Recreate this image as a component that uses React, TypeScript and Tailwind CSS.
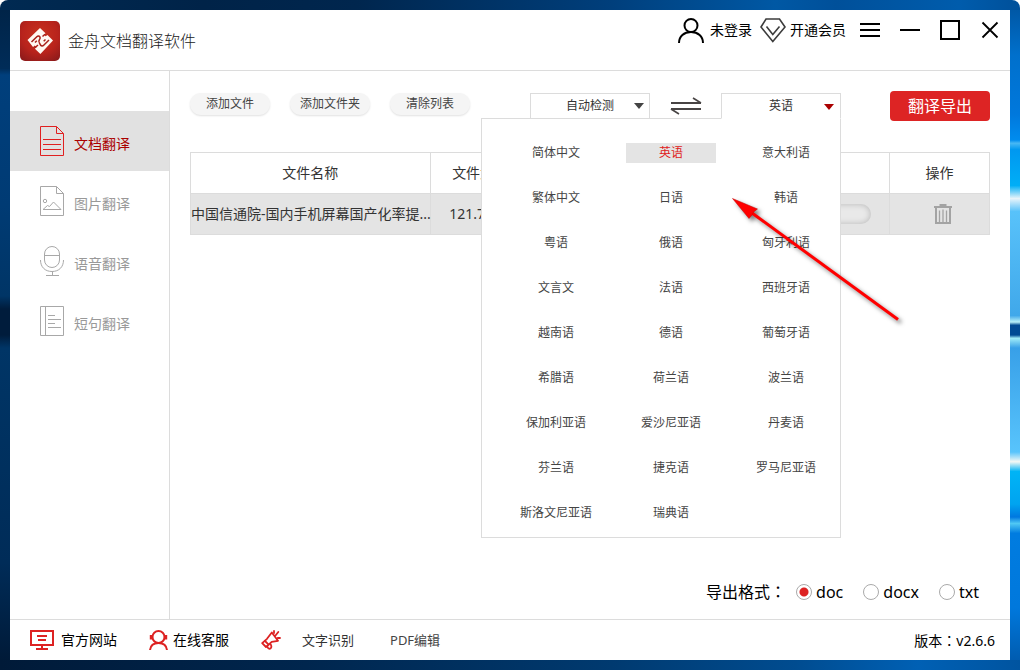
import { useState } from "react";
import type { ReactNode } from "react";

const NAV = ["文档翻译", "图片翻译", "语音翻译", "短句翻译"];

const LANGUAGES = [
  "简体中文", "英语", "意大利语",
  "繁体中文", "日语", "韩语",
  "粤语", "俄语", "匈牙利语",
  "文言文", "法语", "西班牙语",
  "越南语", "德语", "葡萄牙语",
  "希腊语", "荷兰语", "波兰语",
  "保加利亚语", "爱沙尼亚语", "丹麦语",
  "芬兰语", "捷克语", "罗马尼亚语",
  "斯洛文尼亚语", "瑞典语",
];

function Logo() {
  return (
    <svg width="40" height="40" viewBox="0 0 40 40" aria-hidden="true">
      <defs>
        <radialGradient id="logo" cx="0.5" cy="0.35" r="0.75">
          <stop offset="0" stopColor="#c8321f" />
          <stop offset="0.6" stopColor="#b8231c" />
          <stop offset="1" stopColor="#8e1b1b" />
        </radialGradient>
      </defs>
      <rect width="40" height="40" rx="5" fill="url(#logo)" />
      <path d="M7.500 19 20 7l5.500 5.200-1.500 1.600 1.600 1.500 1.900-1.400L33 19.500 20.400 33l-5.500-5.300 1.600-1.500-1.700-1.600-1.800 1.500Z" fill="#fff8f2" />
      <path
        d="M25 13.200 22.500 15.500M11.500 21 16.800 15.700c1-1 2.300-.9 3 .1.800 1.100.4 2-.4 3-1 1.200-1 2 .1 3.300M15.200 26.500 18 24M29 19 23.700 24.300c-1 1-2.300.9-3-.1-.5-.7-.9-1.400-1.200-2.100M15 21.500l1.800-1.800M25.500 18.500l-1.800 1.800"
        fill="none"
        stroke="#a82019"
        strokeWidth="1.500"
      />
    </svg>
  );
}

function NavIcon({ index }: { index: number }) {
  return (
    <svg width="24" height="30" viewBox="0 0 24 30" fill="none" stroke="currentColor" aria-hidden="true">
      {index < 2 && <path d="M16.500.5H.5v29h23V7.500zM16.500.5v7h7" />}
      {index === 0 && <path d="M3 13.500h18M3 18.500h18M3 23.500h18" />}
      {index === 1 && (
        <>
          <circle cx="5" cy="15" r="1.700" />
          <path d="m3 23.500 4.500-4 2 1 4-4.500 7.500 7.500z" />
        </>
      )}
      {index === 2 && (
        <>
          <rect x="4.500" y=".5" width="15" height="21" rx="7.500" />
          <path d="M4.500 9.500h15M.5 14c0 7 4.500 11.500 11.500 11.500S23.500 21 23.500 14M12.500 25.500v4M6 29.500h13" />
        </>
      )}
      {index === 3 && <path d="M.5.500h23v29H.5zM5.500.5v29M8 9.500h7M8 13.500h13M8 17.500h7M8 21.500h13" />}
    </svg>
  );
}

function UserIcon() {
  return (
    <svg width="26" height="25" viewBox="0 0 26 25" fill="none" stroke="#000" strokeWidth="2" aria-hidden="true">
      <circle cx="13" cy="7.500" r="6.500" />
      <path d="M1 25C1 18.500 6 14 13 14s12 4.500 12 11" />
    </svg>
  );
}

function DiamondIcon() {
  return (
    <svg width="26" height="25" viewBox="0 0 26 25" fill="none" stroke="#3c3c3c" strokeWidth="1.600" aria-hidden="true">
      <path d="M6 1h13.500L25 9 12.800 23.500 1 9z" />
      <path d="m6.500 8.500 6.300 8 6.700-8" />
    </svg>
  );
}

function SwapIcon() {
  return (
    <svg width="32" height="18" viewBox="0 0 32 18" fill="none" stroke="#484444" strokeWidth="2" aria-hidden="true">
      <path d="M1 6h30M1 12h30" />
      <path d="m23 1 8 5M9 17l-8-5" strokeWidth="1.600" />
    </svg>
  );
}

function Caret({ color }: { color: string }) {
  return (
    <svg className="pointer-events-none absolute top-2.5 right-1.5" width="10" height="6" viewBox="0 0 10 6" aria-hidden="true">
      <path d="M0 0h10L5 6z" fill={color} />
    </svg>
  );
}

function TrashIcon() {
  return (
    <svg width="18" height="20" viewBox="0 0 18 20" fill="none" stroke="#a3a3a3" strokeWidth="2" aria-hidden="true">
      <path d="M0 3h18M5.500 1h7M2 3v16h14V3" />
      <path d="M5.500 6.500V18M9 5.500V18M12.500 6.500V18" strokeWidth="1.300" />
    </svg>
  );
}

function MonitorIcon() {
  return (
    <svg width="24" height="20" viewBox="0 0 24 20" fill="none" stroke="#dd2222" strokeWidth="2" aria-hidden="true">
      <path d="M1 1h22v14H1zM7 6h10M8 10h8M12 15v4M6 19h12" />
    </svg>
  );
}

function SupportIcon() {
  return (
    <svg width="19" height="20" viewBox="0 0 19 20" fill="none" stroke="#dd2222" strokeWidth="2" aria-hidden="true">
      <circle cx="9.500" cy="7" r="6" />
      <path d="M1 20c.5-4.500 3.500-7 8.500-7s8 2.500 8.500 7" />
      <path d="M2.300 5v4.500M16.700 5v4.500" strokeWidth="3" />
    </svg>
  );
}

function MegaphoneIcon() {
  return (
    <svg width="20" height="20" viewBox="0 0 20 20" fill="none" stroke="#dd2222" strokeWidth="1.800" strokeLinejoin="round" strokeLinecap="round" aria-hidden="true">
      <path d="M10.800 2.500 17 10.800l-6.300 1L5 17 1.200 13.200 6 8.800z" />
      <path d="m4 11 3.600 3.600M6.300 16.500c.5 2 2 2.700 3.200 1.900 1.200-.8 1-2.400.2-4" />
      <path d="M13 1v2M17.300 2l-2.800 3.500M16.800 8h2.200" />
    </svg>
  );
}

function PointerArrow() {
  return (
    <svg
      className="pointer-events-none absolute top-[71px] left-[246px] drop-shadow-[3px_3px_2px_rgba(0,0,0,0.5)]"
      width="180"
      height="140"
      viewBox="728 190 180 140"
      aria-hidden="true"
    >
      <path d="M752 213 898 319.500" stroke="#ff0000" strokeWidth="3" />
      <path d="m732.500 198.500 25 10.500-4.500 3.500-.5 2-3.500 4z" fill="#ff0000" stroke="#c00000" strokeWidth=".5" />
    </svg>
  );
}

function ToolButton({ children }: { children: ReactNode }) {
  return (
    <button className="h-[22px] w-20 rounded-full bg-[#f5f5f5] text-xs text-[#444] shadow-[0_1px_2px_rgba(0,0,0,0.12)]">
      {children}
    </button>
  );
}

function FullColon() {
  return <span className="font-['Noto_Sans_CJK_TC',sans-serif]">：</span>;
}

export default function App() {
  const [nav, setNav] = useState(0);
  const [lang, setLang] = useState("英语");
  const [open, setOpen] = useState(true);
  const [format, setFormat] = useState("doc");

  return (
    <div className="flex min-h-screen flex-col bg-white font-['Noto_Sans','Noto_Sans_CJK_SC',sans-serif] text-sm text-black">
      <div className="h-2.5 rounded-t-lg bg-[linear-gradient(90deg,#002a52,#002348_20%,#00264e_35%,#003f7c_60%,#0058a4_76%,#00509a_82%,#005cac_94%,#00509a)]" />
      <div className="flex grow">
        <div className="w-2.5 shrink-0 bg-[linear-gradient(180deg,#002448,#002c58_9%,#003f7c_10%,#003b74_30%,#003566_44%,#001c3c_46%,#001c3c_50%,#003566_52%,#002c58_85%,#001a38)]" />
        <div className="flex min-w-0 grow flex-col bg-white">
          <header className="flex h-[61px] shrink-0 items-start border-b border-[#dcdcdc] px-2.5">
            <div className="flex h-[61px] items-center gap-2">
              <Logo />
              <h1 className="text-base font-light text-[#222]">金舟文档翻译软件</h1>
            </div>
            <div className="ml-auto flex h-10 items-center">
              <button className="flex items-center gap-1.5">
                <UserIcon />
                未登录
              </button>
              <button className="ml-2 flex items-center gap-1">
                <DiamondIcon />
                开通会员
              </button>
              <div className="ml-3.5 flex items-center gap-5">
                <button aria-label="菜单">
                  <svg className="block" width="20" height="20" viewBox="0 0 20 20" stroke="#000" strokeWidth="2">
                    <path d="M0 4h20M0 10h20M0 16h20" />
                  </svg>
                </button>
                <button aria-label="最小化">
                  <svg className="block" width="20" height="20" viewBox="0 0 20 20" stroke="#000" strokeWidth="2">
                    <path d="M0 10h20" />
                  </svg>
                </button>
                <button aria-label="最大化">
                  <svg className="block" width="20" height="20" viewBox="0 0 20 20" fill="none" stroke="#000" strokeWidth="2">
                    <path d="M1 1h18v18H1z" />
                  </svg>
                </button>
                <button aria-label="关闭">
                  <svg className="block" width="20" height="20" viewBox="0 0 20 20" stroke="#000" strokeWidth="1.800">
                    <path d="m2.500 2.500 15 15M17.500 2.500l-15 15" />
                  </svg>
                </button>
              </div>
            </div>
          </header>

          <div className="flex grow">
            <nav className="w-40 shrink-0 border-r border-[#dcdcdc] pt-10">
              {NAV.map((item, i) => (
                <button
                  key={item}
                  onClick={() => setNav(i)}
                  className={
                    "flex h-[60px] w-full items-center gap-2.5 pl-[30px] " +
                    (i === nav ? "bg-[#e1e1e1]" : "")
                  }
                >
                  <span className={i === nav ? "text-[#e02020]" : "text-[#a8a8a8]"}>
                    <NavIcon index={i} />
                  </span>
                  <span className={"pt-1.5 " + (i === nav ? "text-[#aa0000]" : "text-[#999]")}>{item}</span>
                </button>
              ))}
            </nav>

            <main className="flex min-w-0 grow flex-col px-5 pt-5">
              <div className="flex items-start">
                <div className="flex gap-5 pt-0.5">
                  <ToolButton>添加文件</ToolButton>
                  <ToolButton>添加文件夹</ToolButton>
                  <ToolButton>清除列表</ToolButton>
                </div>
                <div className="ml-[60px] flex pt-0.5">
                  <div className="relative">
                    <select
                      aria-label="源语言"
                      className="block h-[26px] w-[120px] appearance-none border border-[#dcdcdc] bg-white text-center text-xs text-[#333]"
                    >
                      <option>自动检测</option>
                    </select>
                    <Caret color="#444444" />
                  </div>
                  <button aria-label="互换语言" className="flex w-[71px] items-center justify-center">
                    <SwapIcon />
                  </button>
                  <div className="relative">
                    <button
                      aria-label="目标语言"
                      aria-haspopup="listbox"
                      aria-expanded={open}
                      onClick={() => setOpen(!open)}
                      className={
                        "relative z-20 block h-[26px] w-[120px] border border-[#dcdcdc] bg-white text-xs text-[#333] " +
                        (open ? "border-b-white" : "")
                      }
                    >
                      {lang}
                      <Caret color="#aa0000" />
                    </button>
                    {open && (
                      <div className="absolute top-[25px] right-0 z-10 w-[360px] border border-[#dcdcdc] bg-white pt-6 pb-3.5 pl-[29px]">
                        <div role="listbox" aria-label="目标语言" className="grid grid-cols-[90px_90px_90px] gap-[25px]">
                          {LANGUAGES.map((name) => (
                            <button
                              key={name}
                              role="option"
                              aria-selected={name === lang}
                              onClick={() => setLang(name)}
                              className={
                                "h-5 text-center text-xs leading-5 " +
                                (name === lang ? "bg-[#e4e4e4] text-[#e02020]" : "text-[#444]")
                              }
                            >
                              {name}
                            </button>
                          ))}
                        </div>
                        <PointerArrow />
                      </div>
                    )}
                  </div>
                </div>
                <button className="ml-auto h-[30px] w-[100px] rounded bg-[#dd2424] text-base text-white">翻译导出</button>
              </div>

              <table className="mt-[31px] w-full table-fixed border-collapse text-center text-[#333]">
                <colgroup>
                  <col className="w-[30%]" />
                  <col className="w-[12.5%]" />
                  <col className="w-[45%]" />
                  <col className="w-[12.5%]" />
                </colgroup>
                <thead>
                  <tr className="h-[41px]">
                    <th className="border border-[#dcdcdc] p-0 font-normal">文件名称</th>
                    <th className="border border-[#dcdcdc] p-0 font-normal">文件大小</th>
                    <th className="border border-[#dcdcdc] p-0" />
                    <th className="border border-[#dcdcdc] p-0 font-normal">操作</th>
                  </tr>
                </thead>
                <tbody>
                  <tr className="h-[41px] bg-[#e4e4e4]">
                    <td className="border border-[#dcdcdc] p-0 whitespace-nowrap">中国信通院-国内手机屏幕国产化率提...</td>
                    <td className="border border-[#dcdcdc] p-0">121.71KB</td>
                    <td className="border border-[#dcdcdc] p-0 pr-[18px]">
                      <div className="ml-auto h-5 w-[120px] rounded-full bg-[#e9e9e9] shadow-[inset_0_0_6px_rgba(0,0,0,0.22)]" />
                    </td>
                    <td className="border border-[#dcdcdc] p-0">
                      <button aria-label="删除" className="flex w-full justify-center pl-1.5">
                        <TrashIcon />
                      </button>
                    </td>
                  </tr>
                </tbody>
              </table>

              <fieldset className="mt-auto mr-[11px] mb-[18px] flex h-5 items-center justify-end gap-5 text-base leading-5">
                <span className="-mr-2.5">
                  导出格式
                  <FullColon />
                </span>
                {["doc", "docx", "txt"].map((f) => (
                  <label key={f} className="flex items-center gap-1">
                    <input
                      type="radio"
                      name="format"
                      checked={format === f}
                      onChange={() => setFormat(f)}
                      className="size-4 appearance-none rounded-full border border-[#aaa] bg-white checked:bg-[radial-gradient(circle,#dd2222_4px,#ffffff_5px)]"
                    />
                    {f}
                  </label>
                ))}
              </fieldset>
            </main>
          </div>

          <footer className="flex h-[41px] shrink-0 items-center border-t border-[#dcdcdc] pr-[15px] pl-5">
            <a href="#site" className="flex items-center gap-[7px]">
              <MonitorIcon />
              官方网站
            </a>
            <a href="#support" className="ml-8 flex items-center gap-[5px]">
              <SupportIcon />
              在线客服
            </a>
            <a href="#ocr" className="ml-8 flex items-center gap-[21px] text-[13px] text-[#333]">
              <MegaphoneIcon />
              文字识别
            </a>
            <a href="#pdf" className="ml-9 text-[13px] text-[#444]">PDF编辑</a>
            <span className="ml-auto">
              版本
              <FullColon />
              v2.6.6
            </span>
          </footer>
        </div>
        <div className="w-2.5 shrink-0 bg-[linear-gradient(180deg,#0058a6,#0070cc_7%,#0078dc_16%,#008cee_20%,#48b8f4_20.5%,#0098f0_21.5%,#00aef6_27%,#e8f4fa_29%,#58c2fa_31%,#40a8ea_47%,#b8f0f8_48%,#004a94_48.500%,#004a94_50%,#a0ecf8_50.500%,#38a0e8_52%,#58c4fc_68%,#f4f8f4_69.500%,#00b4f6_71%,#00a4f0_76%,#0078e0_78%,#50c8f4_79%,#007ce0_80.500%,#0078dc_92%,#005cb0)]" />
      </div>
      <div className="h-2.5 bg-[linear-gradient(90deg,#001a38,#00264e_30%,#003a70_60%,#004c90_78%,#0060b4_90%,#0054a0)]" />
    </div>
  );
}
